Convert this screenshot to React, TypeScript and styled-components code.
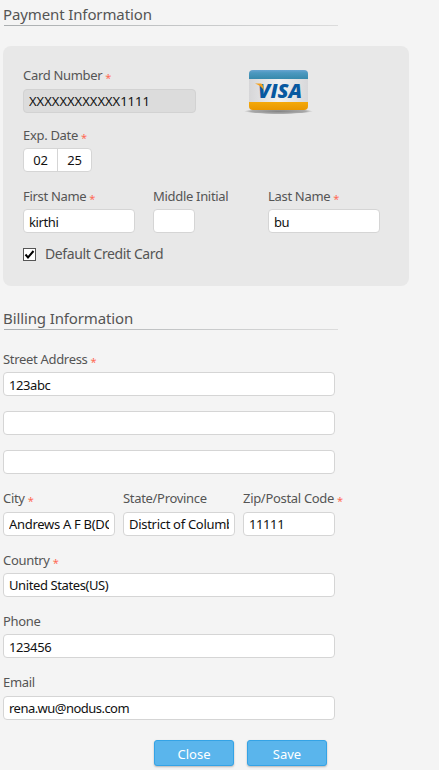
import React from "react";
import styled, { createGlobalStyle } from "styled-components";

const Global = createGlobalStyle`
  *, *::before, *::after { box-sizing: border-box; }
  body {
    margin: 0;
    background: #f4f4f4;
    font-family: "Noto Sans", "Open Sans", sans-serif;
    color: #555;
  }
`;

const Page = styled.main`
  width: 439px;
  height: 770px;
  overflow: hidden;
  padding-left: 3px;
`;

const Title = styled.h2`
  margin: 0;
  width: 335px;
  height: 26px;
  font-size: 15px;
  font-weight: 400;
  line-height: 28px;
  letter-spacing: -0.12px;
  color: #555;
  white-space: nowrap;
  background: linear-gradient(90deg, #aaaeb0, #dcdcdc) 1px 25px / 334px 1px no-repeat;
`;

const Panel = styled.section`
  width: 406px;
  height: 240px;
  margin: 20px 0 18px;
  padding: 19px 20px 0;
  border-radius: 8px;
  background: #e8e8e8;
`;

const CardRow = styled.div`
  display: flex;
  justify-content: space-between;
  height: 48px;
`;

const Row = styled.div`
  display: flex;
  gap: 8px;
`;

const NameRow = styled.div`
  display: grid;
  grid-template-columns: 112px 42px 112px;
  column-gap: 18px;
  & > :last-child {
    margin-left: 55px;
  }
`;

const Field = styled.div<{ $w: number; $top?: number; $gap?: number }>`
  width: ${(p) => p.$w}px;
  flex: none;
  display: flex;
  flex-direction: column;
  gap: ${(p) => p.$gap ?? 3}px;
  margin-top: ${(p) => p.$top ?? 0}px;
`;

const Label = styled.label`
  height: 20px;
  font-size: 13px;
  line-height: 20px;
  letter-spacing: -0.31px;
  white-space: nowrap;
`;

const Star = styled.span`
  display: inline-block;
  margin-left: 3px;
  font-size: 11px;
  line-height: 1;
  letter-spacing: 0;
  color: #ff6a55;
  transform: translateY(2px);
`;

const Input = styled.input<{ $track?: number; $drop?: number }>`
  width: 100%;
  height: 24px;
  margin: 0;
  padding: ${(p) => p.$drop ?? 0}px 5px 0;
  border: 1px solid #d5d5d5;
  border-radius: 4px;
  outline: none;
  background: #fff;
  color: #111;
  font: 13px "Noto Sans", "Open Sans", sans-serif;
  letter-spacing: ${(p) => p.$track ?? -0.4}px;
  &:disabled {
    background: #dcdcdc;
    border-color: #d2d2d2;
    -webkit-text-fill-color: #111;
  }
`;

const DateGroup = styled.div`
  display: flex;
  width: 69px;
  height: 24px;
  border: 1px solid #d5d5d5;
  border-radius: 4px;
  background: #fff;
`;

const DatePart = styled.span`
  flex: 1;
  padding-top: 1px;
  text-align: center;
  font-size: 13px;
  line-height: 20px;
  color: #111;
  letter-spacing: -0.3px;
  & + & {
    border-left: 1px solid #d5d5d5;
  }
`;

const CheckRow = styled.div`
  display: flex;
  align-items: center;
  gap: 9px;
  height: 20px;
  margin-top: 11px;
`;

const CheckText = styled.span`
  font-size: 14px;
  line-height: 20px;
  letter-spacing: -0.4px;
`;

const CheckBox = styled.span`
  width: 13px;
  height: 13px;
  border: 1px solid #555;
  background: #fff;
  display: flex;
  svg { display: block; }
`;

const Address = styled.div`
  display: grid;
  width: 332px;
  gap: 15px;
`;

const Actions = styled.div`
  display: flex;
  gap: 13px;
  margin: 20px 0 0 151px;
`;

const Button = styled.button`
  width: 80px;
  height: 26px;
  padding: 1px 0 0;
  border: 1px solid #34a3e6;
  border-radius: 3px;
  background: #5ab5ec;
  box-shadow: 0 1px 2px rgba(0, 0, 0, 0.25);
  color: #fff;
  font: 13px/20px "Noto Sans", "Open Sans", sans-serif;
`;

const Visa = styled.svg`
  width: 70px;
  height: 48px;
  margin: 3px 75px 0 0;
`;

function VisaCard() {
  return (
    <Visa viewBox="0 0 70 48" aria-label="VISA">
      <defs>
        <linearGradient id="blue" x2="0" y2="1">
          <stop stopColor="#69a5d2" />
          <stop offset=".3" stopColor="#4d99c0" />
          <stop offset="1" stopColor="#3789ac" />
        </linearGradient>
        <linearGradient id="gold" x2="0" y2="1">
          <stop stopColor="#f4a90b" />
          <stop offset="1" stopColor="#e99700" />
        </linearGradient>
        <linearGradient id="face">
          <stop stopColor="#d6d6d8" />
          <stop offset=".5" stopColor="#f0f0f1" />
          <stop offset="1" stopColor="#d8d8da" />
        </linearGradient>
        <radialGradient id="shade">
          <stop stopColor="#777" stopOpacity=".9" />
          <stop offset=".8" stopColor="#888" stopOpacity=".65" />
          <stop offset="1" stopColor="#999" stopOpacity="0" />
        </radialGradient>
        <clipPath id="card">
          <rect x="5" y="2" width="59" height="40" rx="4" />
        </clipPath>
      </defs>
      <ellipse cx="34.5" cy="43.3" rx="34.5" ry="2.8" fill="url(#shade)" />
      <g clipPath="url(#card)">
        <rect x="5" y="2" width="59" height="40" fill="url(#face)" />
        <rect x="5" y="2" width="59" height="9" fill="url(#blue)" />
        <rect x="5" y="34" width="59" height="8" fill="url(#gold)" />
      </g>
      <text
        x="14"
        y="29.5"
        fill="#0758a0"
        fontFamily="Open Sans, sans-serif"
        fontSize="19"
        fontWeight="800"
        fontStyle="italic"
        textLength="44"
        lengthAdjust="spacingAndGlyphs"
      >
        VISA
      </text>
      <path d="M11 15.500H17Q18.500 15.500 19 18L20 22.500Q17 17.500 11 15.500Z" fill="#f5a11c" />
    </Visa>
  );
}

type TextFieldProps = {
  label: string;
  value?: string;
  width: number;
  top?: number;
  gap?: number;
  required?: boolean;
  disabled?: boolean;
  track?: number;
  drop?: number;
};

function TextField({ label, value = "", width, top, gap, required, disabled, track, drop }: TextFieldProps) {
  return (
    <Field $w={width} $top={top} $gap={gap}>
      <Label>
        {label}
        {required && <Star>*</Star>}
      </Label>
      <Input defaultValue={value} disabled={disabled} $track={track} $drop={drop} aria-label={label} />
    </Field>
  );
}

export default function App() {
  return (
    <Page>
      <Global />
      <Title>Payment Information</Title>
      <Panel>
        <CardRow>
          <TextField label="Card Number" value="XXXXXXXXXXXX1111" width={173} gap={4} track={-0.02} required disabled />
          <VisaCard />
        </CardRow>
        <Field $w={69} $top={12}>
          <Label>
            Exp. Date<Star>*</Star>
          </Label>
          <DateGroup>
            <DatePart>02</DatePart>
            <DatePart>25</DatePart>
          </DateGroup>
        </Field>
        <NameRow>
          <TextField label="First Name" value="kirthi" width={112} top={14} drop={2} required />
          <TextField label="Middle Initial" width={42} top={14} />
          <TextField label="Last Name" value="bu" width={112} top={14} drop={2} required />
        </NameRow>
        <CheckRow>
          <CheckBox>
            <svg width="11" height="11" viewBox="0 0 11 11">
              <path d="M1.500 5.500 4 8.500 9.500 2" fill="none" stroke="#000" strokeWidth="2" />
            </svg>
          </CheckBox>
          <CheckText>Default Credit Card</CheckText>
        </CheckRow>
      </Panel>
      <Title>Billing Information</Title>
      <Address>
        <TextField label="Street Address" value="123abc" width={332} top={19} drop={2} required />
        <Input aria-label="Street Address 2" />
        <Input aria-label="Street Address 3" />
      </Address>
      <Row>
        <TextField label="City" value="Andrews A F B(DC)" width={112} top={14} gap={4} track={-0.3} required />
        <TextField label="State/Province" value="District of Columbia" width={112} top={14} gap={4} track={-0.3} />
        <TextField label="Zip/Postal Code" value="11111" width={92} top={14} gap={4} required />
      </Row>
      <TextField label="Country" value="United States(US)" width={332} top={14} required />
      <TextField label="Phone" value="123456" width={332} top={14} drop={2} />
      <TextField label="Email" value="rena.wu@nodus.com" width={332} top={14} gap={4} track={-0.53} />
      <Actions>
        <Button>Close</Button>
        <Button>Save</Button>
      </Actions>
    </Page>
  );
}
